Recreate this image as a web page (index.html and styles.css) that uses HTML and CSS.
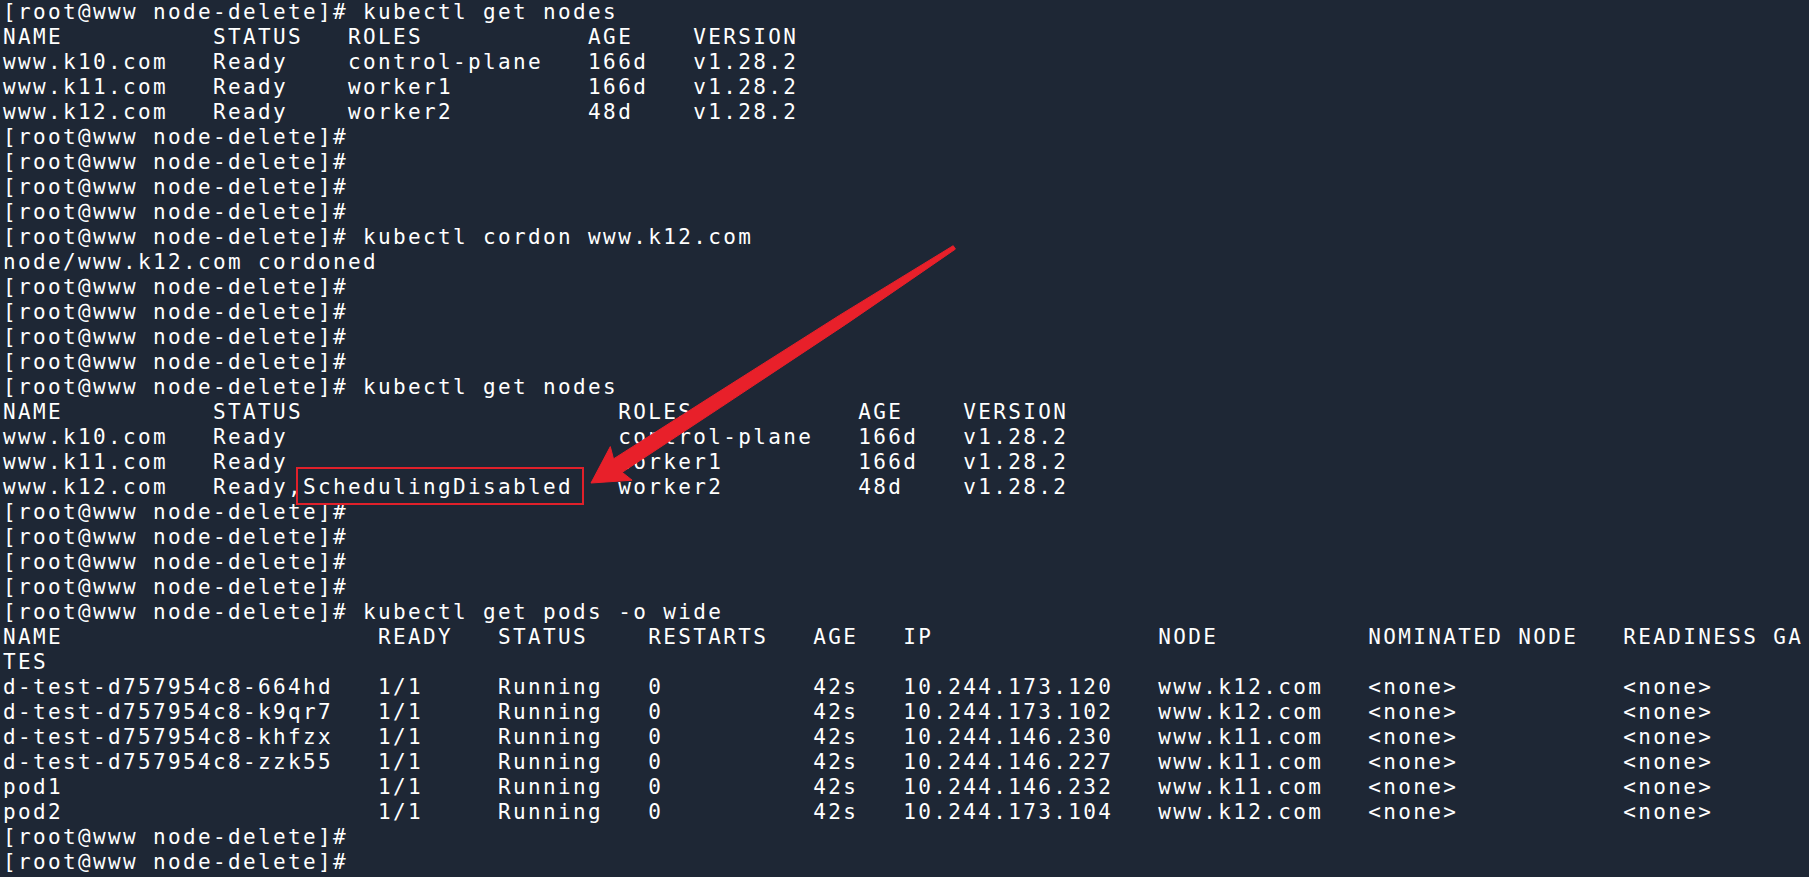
FILE: index.html
```html
<!DOCTYPE html>
<html>
<head>
<meta charset="utf-8">
<link rel="stylesheet" href="styles.css">
</head>
<body>
<main class="terminal">
<pre class="output">[root@www node-delete]# kubectl get nodes
NAME          STATUS   ROLES           AGE    VERSION
www.k10.com   Ready    control-plane   166d   v1.28.2
www.k11.com   Ready    worker1         166d   v1.28.2
www.k12.com   Ready    worker2         48d    v1.28.2
[root@www node-delete]#
[root@www node-delete]#
[root@www node-delete]#
[root@www node-delete]#
[root@www node-delete]# kubectl cordon www.k12.com
node/www.k12.com cordoned
[root@www node-delete]#
[root@www node-delete]#
[root@www node-delete]#
[root@www node-delete]#
[root@www node-delete]# kubectl get nodes
NAME          STATUS                     ROLES           AGE    VERSION
www.k10.com   Ready                      control-plane   166d   v1.28.2
www.k11.com   Ready                      worker1         166d   v1.28.2
www.k12.com   Ready,<span class="hl">SchedulingDisabled</span>   worker2         48d    v1.28.2
[root@www node-delete]#
[root@www node-delete]#
[root@www node-delete]#
[root@www node-delete]#
[root@www node-delete]# kubectl get pods -o wide
NAME                     READY   STATUS    RESTARTS   AGE   IP               NODE          NOMINATED NODE   READINESS GA
TES
d-test-d757954c8-664hd   1/1     Running   0          42s   10.244.173.120   www.k12.com   &lt;none&gt;           &lt;none&gt;
d-test-d757954c8-k9qr7   1/1     Running   0          42s   10.244.173.102   www.k12.com   &lt;none&gt;           &lt;none&gt;
d-test-d757954c8-khfzx   1/1     Running   0          42s   10.244.146.230   www.k11.com   &lt;none&gt;           &lt;none&gt;
d-test-d757954c8-zzk55   1/1     Running   0          42s   10.244.146.227   www.k11.com   &lt;none&gt;           &lt;none&gt;
pod1                     1/1     Running   0          42s   10.244.146.232   www.k11.com   &lt;none&gt;           &lt;none&gt;
pod2                     1/1     Running   0          42s   10.244.173.104   www.k12.com   &lt;none&gt;           &lt;none&gt;
[root@www node-delete]#
[root@www node-delete]#</pre>
<svg class="arrow" width="1809" height="877" viewBox="0 0 1809 877" aria-hidden="true">
  <polygon points="591,483 610.3,446.6 613.5,458.9 713,395.5 839.7,315.2 907.9,273.4 953.2,245.7 955.4,249.1 911.7,279.2 845.7,324.4 720.7,407.3 622.2,472.3 632.1,480.2" fill="#e8202a" stroke="#e8202a" stroke-width="1" stroke-linejoin="round"/>
</svg>
</main>
</body>
</html>
```

FILE: styles.css
```css
html, body {
  margin: 0;
  padding: 0;
  background: #1e2735;
}

.terminal {
  position: relative;
  width: 1809px;
  height: 877px;
  overflow: hidden;
  background: #1e2735;
}

.output {
  margin: 0;
  padding: 0 0 0 3px;
  font-family: "DejaVu Sans Mono", monospace;
  font-size: 21px;
  line-height: 25px;
  letter-spacing: 2.36px;
  color: #ffffff;
  white-space: pre;
}

.hl {
  position: relative;
}

.hl::after {
  content: "";
  position: absolute;
  left: -7px;
  right: -11px;
  top: -8px;
  bottom: -6px;
  border: 2px solid #e0202a;
}

.arrow {
  position: absolute;
  left: 0;
  top: 0;
  pointer-events: none;
}
```
